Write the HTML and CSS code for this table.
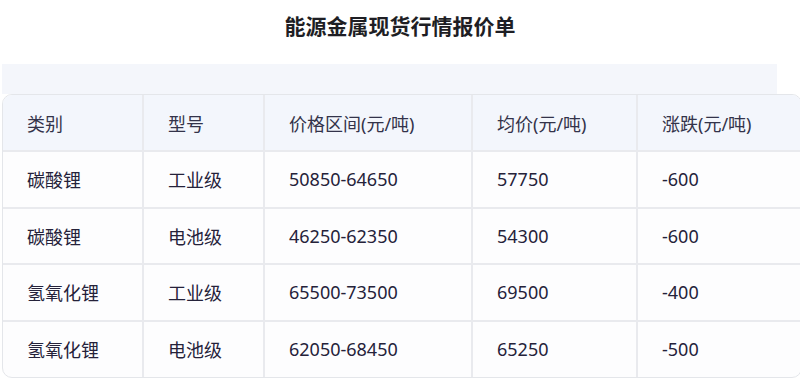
FILE: index.html
```html
<!DOCTYPE html>
<html lang="zh">
<head>
<meta charset="utf-8">
<link rel="stylesheet" href="styles.css">
</head>
<body>
<div class="page">
  <h1 class="title">能源金属现货行情报价单</h1>
  <div class="band"></div>
  <div class="table-wrap">
    <table class="grid">
      <colgroup>
        <col class="c1"><col class="c2"><col class="c3"><col class="c4"><col class="c5">
      </colgroup>
      <thead>
        <tr><th>类别</th><th>型号</th><th>价格区间(元/吨)</th><th>均价(元/吨)</th><th>涨跌(元/吨)</th></tr>
      </thead>
      <tbody>
        <tr><td>碳酸锂</td><td>工业级</td><td>50850-64650</td><td>57750</td><td>-600</td></tr>
        <tr><td>碳酸锂</td><td>电池级</td><td>46250-62350</td><td>54300</td><td>-600</td></tr>
        <tr><td>氢氧化锂</td><td>工业级</td><td>65500-73500</td><td>69500</td><td>-400</td></tr>
        <tr><td>氢氧化锂</td><td>电池级</td><td>62050-68450</td><td>65250</td><td>-500</td></tr>
      </tbody>
    </table>
  </div>
</div>
</body>
</html>
```
FILE: styles.css
```css
* { box-sizing: border-box; }
html, body { margin: 0; padding: 0; background: #ffffff; }
body {
  font-family: "Noto Sans", "Noto Sans CJK SC", sans-serif;
  color: #25223a;
}
.page { width: 800px; height: 378px; overflow: hidden; }
.title {
  margin: 0;
  height: 64px;
  padding-top: 10px;
  text-align: center;
  font-family: "Noto Sans CJK SC", sans-serif;
  font-size: 21px;
  line-height: 30px;
  font-weight: 700;
  color: #1e1e24;
}
.band {
  margin-left: 2px;
  width: 775px;
  height: 30px;
  background: #f4f6fb;
}
.table-wrap {
  margin-left: 2px;
  width: 800px;
  border: 1px solid #e4e6ea;
  border-radius: 10px;
  overflow: hidden;
  background: #fdfdfe;
}
.grid {
  width: 100%;
  border-collapse: collapse;
  table-layout: fixed;
  font-size: 18px;
}
.c1 { width: 140px; }
.c2 { width: 121px; }
.c3 { width: 208px; }
.c4 { width: 165px; }
.c5 { width: 164px; }
.grid th, .grid td {
  text-align: left;
  padding: 0 0 0 24px;
  border-right: 2px solid #e9eaee;
  border-bottom: 2px solid #e9eaee;
  white-space: nowrap;
}
.grid th:last-child, .grid td:last-child { border-right: none; }
.grid tbody tr:last-child td { border-bottom: none; }
.grid th {
  height: 56px;
  font-weight: 400;
  background: #f3f6fc;
  color: #33334a;
}
.grid td { height: 56.5px; }
```
